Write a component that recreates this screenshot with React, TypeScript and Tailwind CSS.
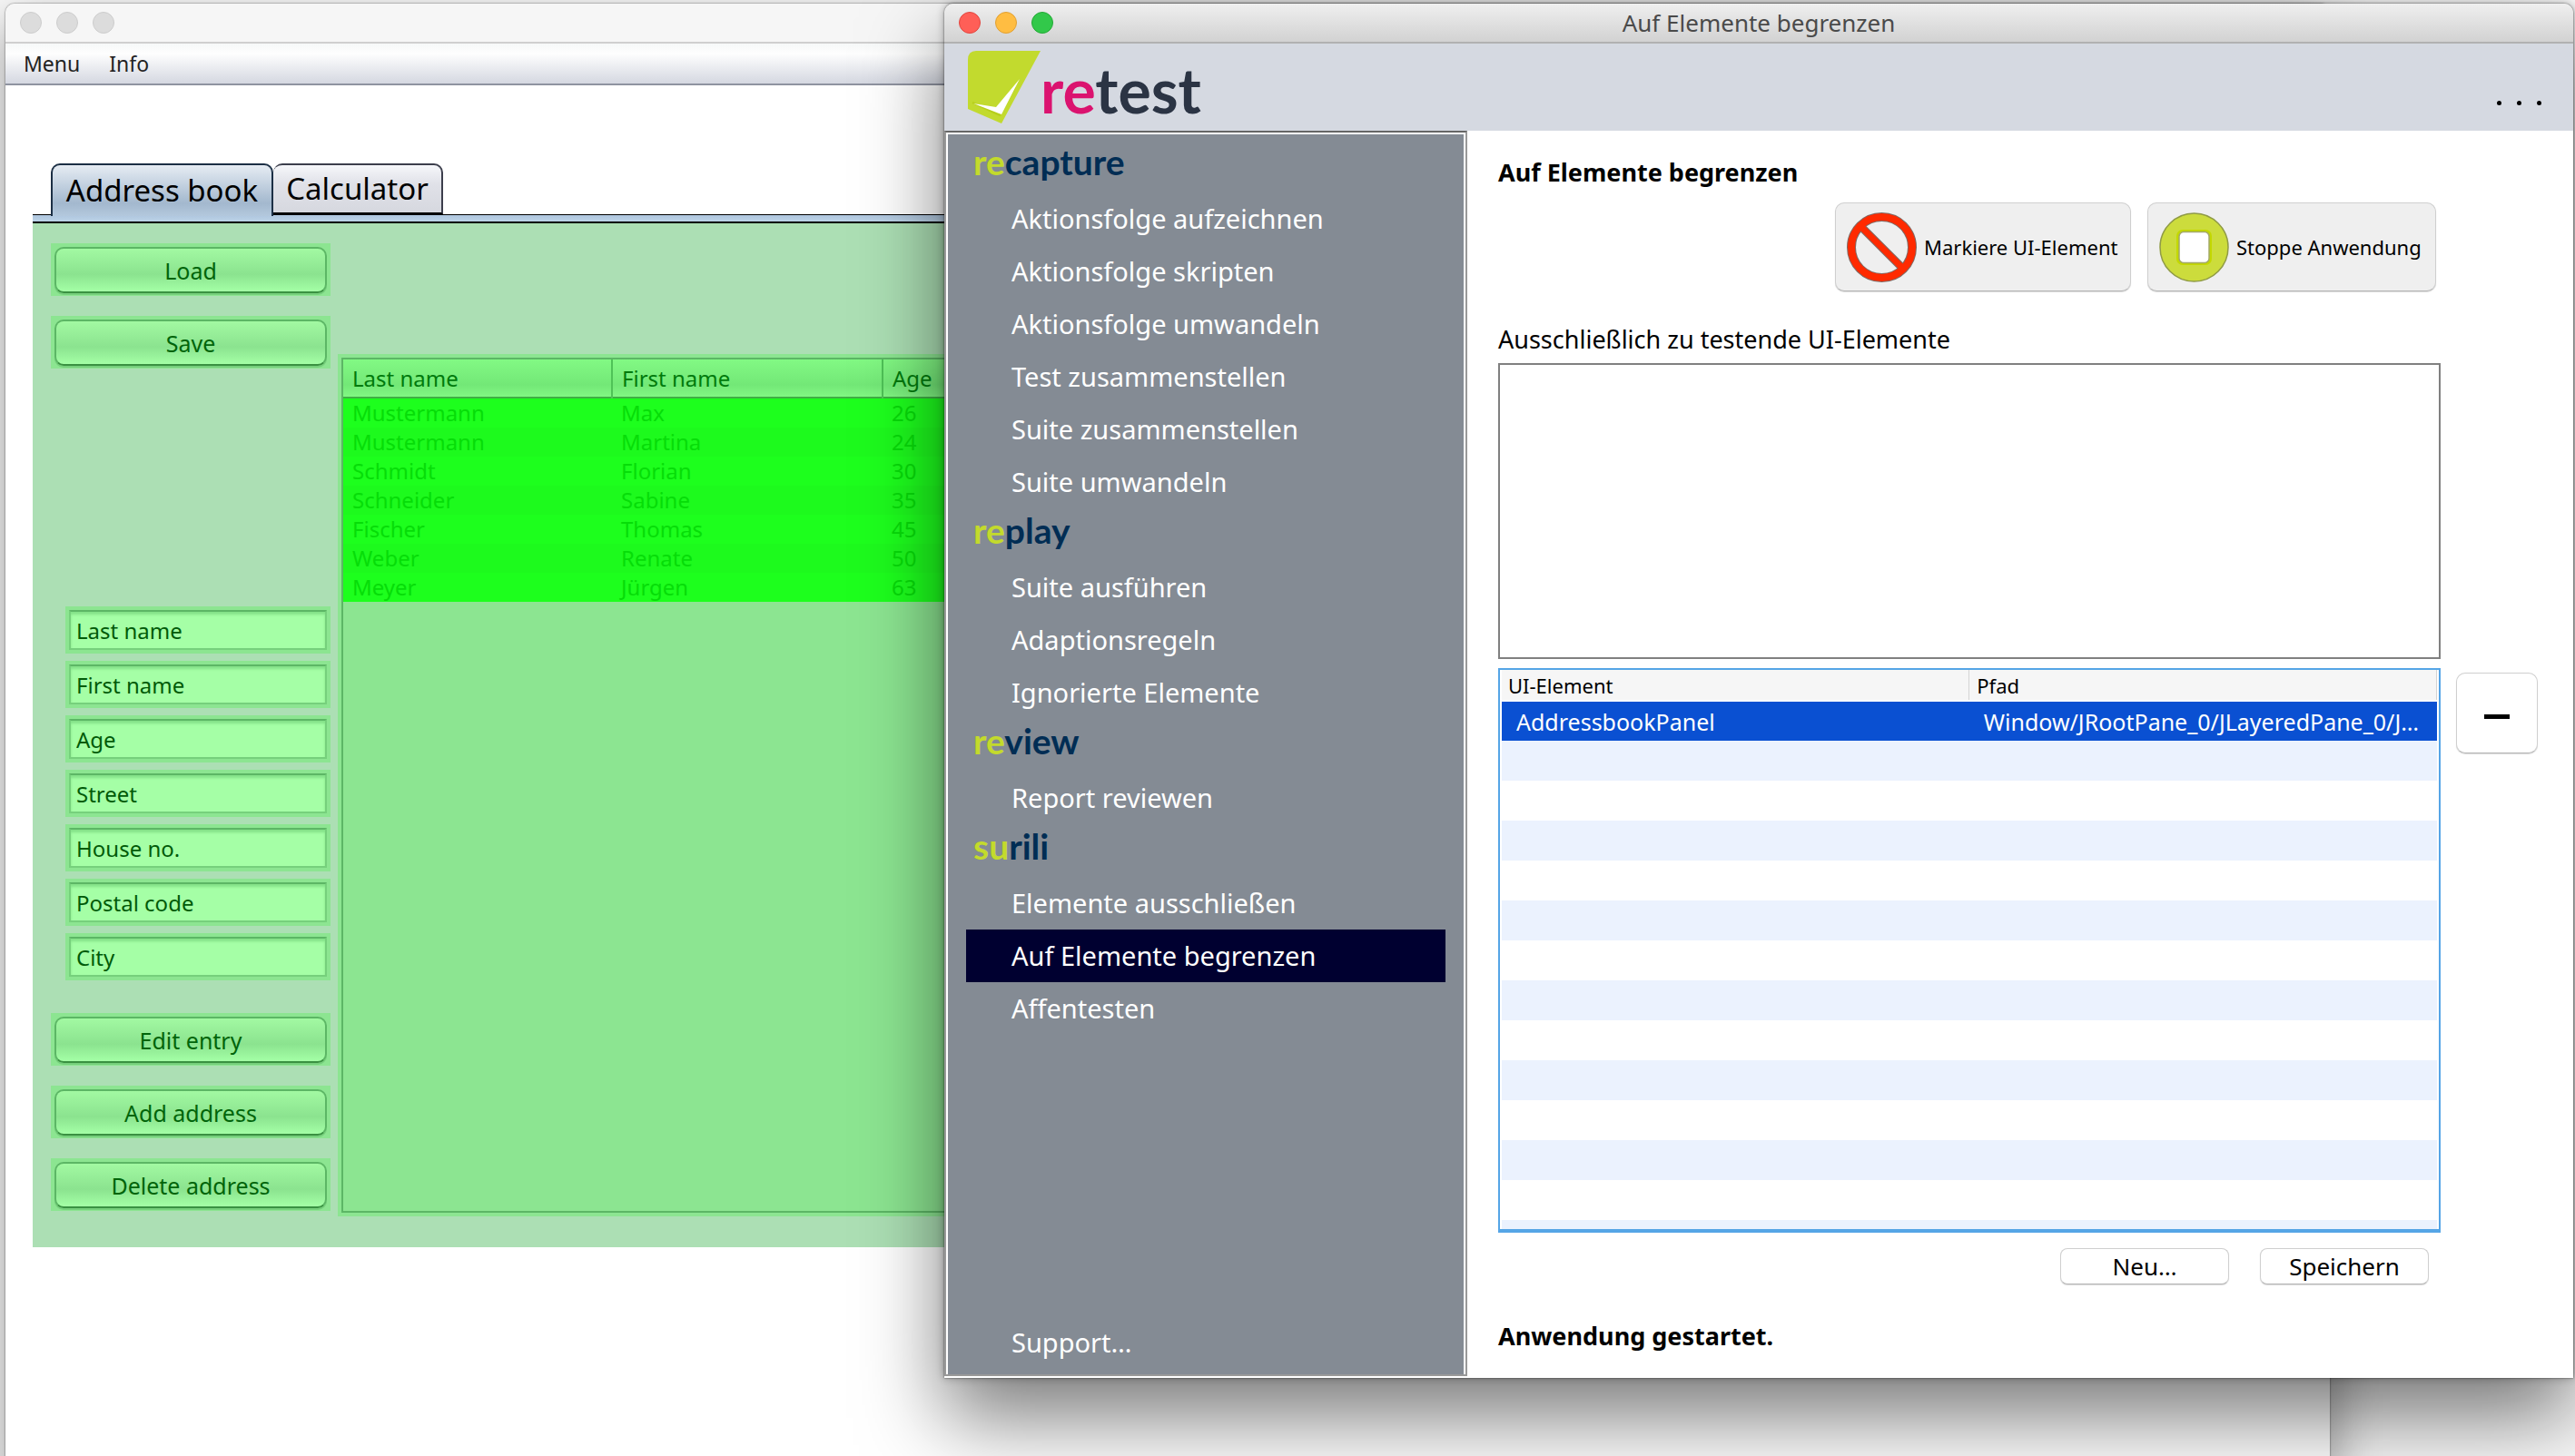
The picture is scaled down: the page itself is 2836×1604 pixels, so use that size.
import React from "react";

const people: [string, string, number][] = [
  ["Mustermann", "Max", 26],
  ["Mustermann", "Martina", 24],
  ["Schmidt", "Florian", 30],
  ["Schneider", "Sabine", 35],
  ["Fischer", "Thomas", 45],
  ["Weber", "Renate", 50],
  ["Meyer", "Jürgen", 63],
];

const fields = ["Last name", "First name", "Age", "Street", "House no.", "Postal code", "City"];

const sections = [
  {
    lead: "re",
    rest: "capture",
    items: [
      "Aktionsfolge aufzeichnen",
      "Aktionsfolge skripten",
      "Aktionsfolge umwandeln",
      "Test zusammenstellen",
      "Suite zusammenstellen",
      "Suite umwandeln",
    ],
  },
  { lead: "re", rest: "play", items: ["Suite ausführen", "Adaptionsregeln", "Ignorierte Elemente"] },
  { lead: "re", rest: "view", items: ["Report reviewen"] },
  { lead: "su", rest: "rili", items: ["Elemente ausschließen", "Auf Elemente begrenzen", "Affentesten"] },
];

function GreenButton({ label }: { label: string }) {
  return (
    <div className="h-[58px] bg-[#8ce591] px-1 pt-1 pb-[3px]">
      <button className="h-[51px] w-full rounded-[10px] border-2 border-[#5cb665] border-b-[#3a9142] bg-linear-to-b from-[#a2f9a2] via-[#8be38f] via-60% to-[#a4ffa6] text-[25px] leading-[46px] text-[#00640a] shadow-[0_2px_0_#76cf7c]">
        {label}
      </button>
    </div>
  );
}

function AddressWindow() {
  return (
    <section className="absolute top-1 -bottom-6 left-[6px] right-[270px] flex flex-col rounded-t-[10px] bg-white shadow-[0_0_2px_rgba(0,0,0,0.7),0_20px_60px_rgba(0,0,0,0.4)]">
      <div className="flex h-11 items-center gap-4 rounded-t-[10px] border-b-2 border-[#cfcfcf] bg-[#f6f6f6] pl-4">
        <button aria-label="Close" className="size-6 rounded-full border border-[#cdcdcd] bg-[#dcdcdc]" />
        <button aria-label="Minimize" className="size-6 rounded-full border border-[#cdcdcd] bg-[#dcdcdc]" />
        <button aria-label="Zoom" className="size-6 rounded-full border border-[#cdcdcd] bg-[#dcdcdc]" />
      </div>
      <nav className="flex h-[46px] items-center gap-8 border-b-2 border-[#8f93a0] bg-linear-to-b from-[#f6f8f8] via-[#fefefe] via-25% to-[#d5d8e1] pl-5 text-[23px] text-[#222]">
        <button>Menu</button>
        <button>Info</button>
      </nav>
      <div className="mt-[86px] ml-[30px]">
        <div role="tablist" className="flex pl-5">
          <button
            role="tab"
            aria-selected="true"
            className="relative -mb-[2px] h-[58px] w-[245px] rounded-t-[10px] border-2 border-b-0 border-[#1c2f45] bg-linear-to-b from-[#e6ecf3] via-[#a3b8ce] via-75% to-[#b3c8dd] text-[33px] whitespace-nowrap text-black"
          >
            Address book
          </button>
          <button
            role="tab"
            aria-selected="false"
            className="h-14 w-[187px] rounded-t-[10px] border-2 border-l-0 border-[#3c3e4c] border-b-black bg-linear-to-b from-[#f6f7fa] via-[#e0e1e8] via-40% to-[#d6d8df] text-[33px] text-black"
          >
            Calculator
          </button>
        </div>
        <div className="h-[10px] border-t border-b-2 border-black bg-linear-to-b from-[#afc6de] to-[#bcd3e8]" />
        <div className="flex gap-2 bg-[#acdfb4] pr-5 pb-[34px] pl-5">
          <div className="flex w-[308px] flex-col pt-[22px] pb-[6px]">
            <div className="flex flex-col gap-[22px]">
              <GreenButton label="Load" />
              <GreenButton label="Save" />
            </div>
            <div className="mt-[262px] flex flex-col gap-2 pl-4">
              {fields.map((f) => (
                <div key={f} className="h-[52px] bg-[#8ce591] p-1">
                  <input
                    aria-label={f}
                    defaultValue={f}
                    className="h-11 w-full border-2 border-[#76d07c] border-t-[#5cb665] bg-[#a5ffa6] px-[6px] text-2xl text-[#005a08] shadow-[inset_0_3px_3px_rgba(70,170,80,0.35)] outline-none"
                  />
                </div>
              ))}
            </div>
            <div className="mt-9 flex flex-col gap-[22px]">
              <GreenButton label="Edit entry" />
              <GreenButton label="Add address" />
              <GreenButton label="Delete address" />
            </div>
          </div>
          <div className="mt-36 flex-1 bg-[#8ce591] p-1">
            <div className="h-full border-2 border-[#5cb665]">
              <table className="w-full table-fixed text-left text-2xl">
                <thead>
                  <tr className="h-[42px] border-b-2 border-[#3fae45] bg-linear-to-b from-[#82f984] via-[#73e877] via-70% to-[#80f682] text-[#007a0c]">
                    <th className="w-[296px] border-r-2 border-[#4fc257] pl-[10px] font-normal">Last name</th>
                    <th className="w-[298px] border-r-2 border-[#4fc257] pl-[10px] font-normal">First name</th>
                    <th className="pl-[10px] font-normal">Age</th>
                  </tr>
                </thead>
                <tbody>
                  {people.map(([last, first, age], i) => (
                    <tr key={i} className="h-8 bg-[#1dff1d] leading-8 text-[#06dd08] even:bg-[#1dfa1d]">
                      <td className="pl-[10px]">{last}</td>
                      <td className="pl-[10px]">{first}</td>
                      <td className="pl-[10px]">{age}</td>
                    </tr>
                  ))}
                </tbody>
              </table>
            </div>
          </div>
        </div>
      </div>
    </section>
  );
}

function Sidebar() {
  return (
    <nav className="mb-[2px] flex w-[576px] shrink-0 flex-col border-2 border-[#999] border-t-[#666] bg-white p-[2px] pb-0">
      <div className="flex flex-1 flex-col bg-[#848b94] px-5 pt-[6px] pb-[6px]">
        {sections.map((s) => (
          <div key={s.rest}>
            <h2 className="h-[58px] pl-2 font-['Lato',sans-serif] text-[39px] leading-[48px] font-bold text-[#002d54]">
              <span className="text-[#c3da2c]">{s.lead}</span>
              {s.rest}
            </h2>
            {s.items.map((item) => (
              <a
                key={item}
                href="#"
                className={
                  item === "Auf Elemente begrenzen"
                    ? "block bg-[#000030] pl-[50px] text-[29px] leading-[58px] text-white"
                    : "block pl-[50px] text-[29px] leading-[58px] text-white"
                }
              >
                {item}
              </a>
            ))}
          </div>
        ))}
        <a href="#" className="mt-auto block pl-[50px] text-[29px] leading-[58px] text-white">
          Support…
        </a>
      </div>
    </nav>
  );
}

function ForbiddenIcon() {
  return (
    <svg viewBox="0 0 77 77" className="size-[77px] shrink-0" fill="none" aria-hidden="true">
      <g stroke="#7d6a66" strokeWidth="10">
        <circle cx="38.5" cy="38.5" r="33.5" />
        <path d="M15 15L62 62" strokeWidth="9" />
      </g>
      <g stroke="#ff2a00" strokeWidth="8">
        <circle cx="38.5" cy="38.5" r="33.5" />
        <path d="M15 15L62 62" strokeWidth="7" />
      </g>
    </svg>
  );
}

function StopIcon() {
  return (
    <svg viewBox="0 0 77 77" className="size-[77px] shrink-0" aria-hidden="true">
      <circle cx="38.5" cy="38.5" r="37.5" fill="#ccdc3c" stroke="#8f9a45" strokeWidth="1.5" />
      <rect x="19" y="19" width="39" height="39" rx="7" fill="#c3d800" />
      <rect x="22" y="21.500" width="33" height="34" rx="5" fill="#fff" stroke="#a3a86a" strokeWidth="1.5" />
    </svg>
  );
}

function RetestWindow() {
  return (
    <section className="absolute top-1 right-[2px] bottom-[86px] left-[1040px] flex flex-col rounded-t-[10px] bg-white shadow-[0_0_2px_rgba(0,0,0,0.7),0_0_10px_rgba(0,0,0,0.3),0_44px_90px_rgba(0,0,0,0.52)]">
      <div className="grid h-11 grid-cols-[1fr_auto_1fr] items-center rounded-t-[10px] border-b-2 border-[#b1b1b1] bg-linear-to-b from-[#efefef] to-[#d2d2d2] pl-4">
        <div className="flex gap-4">
          <button aria-label="Schließen" className="size-6 rounded-full border border-[#e2463f] bg-[#ff5f57]" />
          <button aria-label="Minimieren" className="size-6 rounded-full border border-[#e1a032] bg-[#ffbd42]" />
          <button aria-label="Zoomen" className="size-6 rounded-full border border-[#23a935] bg-[#32c84a]" />
        </div>
        <h1 className="pr-4 text-[26px] leading-9 text-[#4a4a4a]">Auf Elemente begrenzen</h1>
      </div>
      <header className="flex h-24 items-end justify-between bg-[#d5d9e1] pr-[35px] pb-2 pl-[26px]">
        <div className="flex items-end">
          <svg viewBox="0 0 80 80" className="size-20" aria-hidden="true">
            <path d="M9 0H80L37 80L0 64V10Q0 0 9 0Z" fill="#c2da2e" />
            <path d="M5 57L35 71L52 40" fill="none" stroke="#aec60f" strokeWidth="2" opacity="0.6" />
            <path d="M6 58L31 62L57 31L37 70Z" fill="#fff" />
          </svg>
          <span className="font-['Lato',sans-serif] text-[68px] leading-[74px] font-bold text-[#2b3444]">
            <span className="text-[#db136f]">re</span>test
          </span>
        </div>
        <button aria-label="Mehr" className="mb-5 flex gap-[17px]">
          <span className="size-[5px] rounded-full bg-black" />
          <span className="size-[5px] rounded-full bg-black" />
          <span className="size-[5px] rounded-full bg-black" />
        </button>
      </header>
      <div className="flex min-h-0 flex-1">
        <Sidebar />
        <main className="grid min-w-0 flex-1 grid-cols-[minmax(0,1fr)_90px] grid-rows-[auto_auto_minmax(0,1fr)_auto_auto] gap-x-[17px] pt-7 pr-[39px] pb-7 pl-[34px] text-black">
          <div className="col-start-1">
            <h2 className="text-[27px] leading-9 font-bold">Auf Elemente begrenzen</h2>
            <div className="mt-[15px] flex justify-end gap-[18px] pr-[5px] text-[22px]">
              <button className="flex h-[98px] w-[326px] items-center gap-2 rounded-[10px] border border-[#cfcfcf] border-b-[#b5b5b5] bg-[#efefef] pl-3 whitespace-nowrap shadow-[0_1px_1px_rgba(0,0,0,0.15)]">
                <ForbiddenIcon />
                Markiere UI-Element
              </button>
              <button className="flex h-[98px] w-[318px] items-center gap-2 rounded-[10px] border border-[#cfcfcf] border-b-[#b5b5b5] bg-[#efefef] pl-3 whitespace-nowrap shadow-[0_1px_1px_rgba(0,0,0,0.15)]">
                <StopIcon />
                Stoppe Anwendung
              </button>
            </div>
          </div>
          <div className="col-start-1 mt-[35px]">
            <label htmlFor="targets" className="block text-[27px] leading-9">
              Ausschließlich zu testende UI-Elemente
            </label>
            <textarea
              id="targets"
              className="mt-2 block h-[326px] w-full resize-none border-2 border-[#808080] bg-white p-2 text-[25px] outline-none"
            />
          </div>
          <div className="col-start-1 mt-[10px] overflow-hidden border-2 border-b-4 border-[#55a5e6] px-[2px]">
            <table className="w-full table-fixed text-left">
              <thead>
                <tr className="h-[34px] border-b-2 border-white bg-[#f6f6f6] text-[22px] leading-[30px]">
                  <th className="w-1/2 pl-[7px] font-normal">UI-Element</th>
                  <th className="border-x border-[#d4d4d4] pl-2 font-normal">Pfad</th>
                </tr>
              </thead>
              <tbody>
                <tr className="h-11 bg-[#0a50d2] text-[25px] leading-9 text-white">
                  <td className="pl-4">AddressbookPanel</td>
                  <td className="pl-4 whitespace-nowrap">Window/JRootPane_0/JLayeredPane_0/J…</td>
                </tr>
                {Array.from({ length: 13 }, (_, i) => (
                  <tr key={i} className="h-11 bg-[#ebf2fe] odd:bg-white">
                    <td />
                    <td />
                  </tr>
                ))}
              </tbody>
            </table>
          </div>
          <button
            aria-label="Entfernen"
            className="col-start-2 mt-[15px] flex h-[89px] items-center justify-center self-start rounded-[10px] border border-[#cfcfcf] border-b-[#b5b5b5] bg-white shadow-[0_1px_1px_rgba(0,0,0,0.15)]"
          >
            <span className="mt-2 h-[5px] w-7 bg-black" />
          </button>
          <div className="col-start-1 mt-[17px] flex justify-end gap-[34px] pr-[13px] text-[26px]">
            <button className="h-10 w-[186px] rounded-lg border border-[#cfcfcf] border-b-[#b5b5b5] bg-white leading-9 shadow-[0_1px_1px_rgba(0,0,0,0.15)]">
              Neu…
            </button>
            <button className="h-10 w-[186px] rounded-lg border border-[#cfcfcf] border-b-[#b5b5b5] bg-white leading-9 shadow-[0_1px_1px_rgba(0,0,0,0.15)]">
              Speichern
            </button>
          </div>
          <p role="status" className="col-start-1 mt-[39px] text-[27px] leading-9 font-bold">
            Anwendung gestartet.
          </p>
        </main>
      </div>
    </section>
  );
}

export default function App() {
  return (
    <div className="relative h-screen overflow-hidden bg-[#fafafa] font-['Noto_Sans',sans-serif]">
      <AddressWindow />
      <RetestWindow />
    </div>
  );
}
